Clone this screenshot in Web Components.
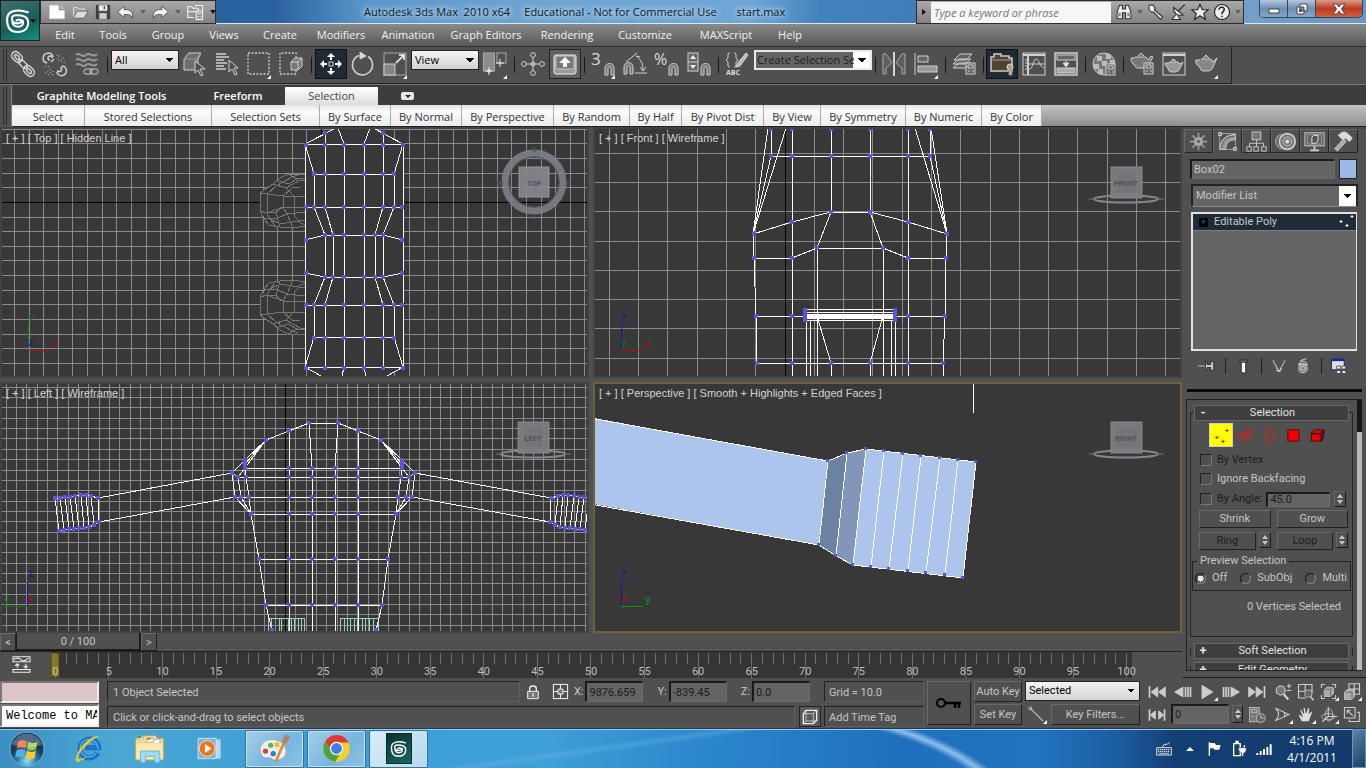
<!DOCTYPE html>
<html lang="en">
<head>
<meta charset="utf-8">
<title>Autodesk 3ds Max</title>
<style>
  html, body {
    height: 100%;
  }

  body {
    margin: 0;
    overflow: hidden;
    background: #505050;
    color: #c6c6c6;
    font: 11px/14px Roboto, "Liberation Sans", sans-serif;
    --ui: "Open Sans", "Noto Sans", sans-serif;
  }
</style>
</head>
<body>
<max-app></max-app>

<script>
// 24x24 icons, stroked in the current colour
const icons = {
  link: '<g fill="none" stroke-width="1.500"><rect x="0" y="1" width="12" height="8" rx="4" transform="rotate(45 6 5)"/><rect x="3" y="3.500" width="6" height="3" rx="1.500" transform="rotate(45 6 5)"/><rect x="12" y="15" width="12" height="8" rx="4" transform="rotate(45 18 19)"/><rect x="15" y="17.500" width="6" height="3" rx="1.500" transform="rotate(45 18 19)"/><rect x="7" y="9.500" width="10" height="5" rx="2.500" transform="rotate(45 12 12)"/></g>',
  unlink: '<g fill="none"><path d="M8 10l3-3M10 5a5 5 0 1 0-6 6M7 8a2 2 0 1 1 2-2M14 21a5 5 0 1 0 6-7l-2 2a2 2 0 1 1-3 3z" stroke-width="1.5"/><path stroke-dasharray="1 2" d="M14 7l4-5M15 9l7-4M14 4l1-3M18 9l5 2M2 14l5 1M2 21l6-4M5 23l4-4M9 23l1-4"/></g>',
  bind: '<g fill="none"><path d="M1 3c4-4 6 4 10 0s6 4 11-1M1 8c4-4 6 4 10 0s6 4 11-1M1 13c4-4 6 4 10 0s6 4 11-1" stroke="#999" stroke-width="2"/><rect x="9" y="17" width="8" height="5" rx="2"/><rect x="15" y="17" width="8" height="5" rx="2"/></g>',
  pick: '<path d="M1 7l5-6h12l-3 6v11H1z" fill="#6e6e6e"/><path d="M1 7h12l5-6M13 7v10" fill="none" stroke="#999"/><path d="M12 9v12l3-3 3 6 2-1-3-6h5z" fill="#505050"/>',
  byname: '<path d="M1 2h10M1 5h13M1 8h8M1 11h11M1 14h8M1 17h10" stroke-width="1.5"/><path d="M14 8v12l3-3 3 6 2-1-3-6h4z" fill="#505050"/>',
  region: '<rect x="1" y="1" width="21" height="21" fill="none" stroke-dasharray="2 1.5" stroke-width="1.3"/>',
  crossing: '<path d="M17 6V1H1v21h16v-4" fill="none" stroke-dasharray="2 1.5" stroke-width="1.3"/><path d="M12 10l4-4h7v8l-4 4h-7z" fill="#777"/><path d="M12 10h7v8M19 10l4-4" fill="none"/>',
  move: '<path stroke="none" fill="#fff" d="M12 1l4 4h-3v3h-2V5H8zM12 23l4-4h-3v-3h-2v3H8zM1 12l4-4v3h3v2H5v3zM23 12l-4-4v3h-3v2h3v3z"/><rect x="10" y="10" width="4" height="4" fill="none"/>',
  rotate: '<path d="M8 3.5a10 10 0 1 0 9 1" fill="none" stroke-width="1.6"/><path d="M9 0v7l6-3z" fill="#ddd"/>',
  scale: '<rect x="1" y="1" width="22" height="22" fill="none" stroke="#aaa"/><rect x="1" y="12" width="11" height="11" fill="#858585"/><path d="M13 11l7-7M16 3h5v5" fill="none" stroke="#fff" stroke-width="1.5"/>',
  pivot: '<rect x="0.500" y="1" width="11" height="18" fill="#8c8c8c" stroke="#aaa"/><rect x="14" y="1" width="9" height="10" fill="none" stroke="#aaa"/><path d="M6 15v8M2 19h8M17 7v8M13 11h8M6 17v4M4 19h4" stroke="#eee"/>',
  manipulate: '<path d="M12 5v14M5 12h14"/><g fill="#505050"><circle cx="12" cy="3" r="2.400"/><circle cx="12" cy="21" r="2.400"/><circle cx="3" cy="12" r="2.400"/><circle cx="21" cy="12" r="2.400"/></g><circle cx="12" cy="12" r="2"/>',
  keyboard: '<rect x="1" y="3" width="22" height="19" rx="2" fill="#999" stroke="#eee"/><rect x="3" y="4" width="18" height="13" rx="1" fill="#777" stroke="#ccc"/><path d="M12 5l6 6h-4v4h-4v-4H6z" fill="#fff" stroke="none"/>',
  snap: '<text x="0" y="13" font-size="17" font-family="Open Sans" fill="#ddd" stroke="none">3</text><path d="M14 23v-7a4 4 0 0 1 9 0v7h-3v-7a1.500 1.500 0 0 0-3 0v7z" fill="#777"/>',
  anglesnap: '<path d="M1 22v-7a4 4 0 0 1 9 0v7H7v-7a1.500 1.500 0 0 0-3 0v7z" fill="#777"/><path d="M3 10L14 1M12 21h12M13 4c5 3 7 8 7 15M13 4l4 1M20 19l-3-4M20 19l3-4" fill="none"/>',
  percent: '<text x="-1" y="13" font-size="16" font-family="Open Sans" fill="#ddd" stroke="none">%</text><path d="M14 23v-7a4 4 0 0 1 9 0v7h-3v-7a1.500 1.500 0 0 0-3 0v7z" fill="#777"/>',
  spinsnap: '<rect x="1" y="1" width="10" height="18" fill="#666"/><path d="M1 10h10"/><path d="M3 7h6L6 3zM3 13h6l-3 4z" fill="#eee" stroke="none"/><path d="M14 23v-7a4 4 0 0 1 9 0v7h-3v-7a1.500 1.500 0 0 0-3 0v7z" fill="#777"/>',
  named: '<path d="M5 1H4Q3 1 3 3v3L1 8l2 2v3q0 2 1 2h1M9 1h1q1 0 1 2v3l2 2-2 2v3q0 2-1 2H9" fill="none"/><path d="M12 12l9-11 2 2-8 11-4 1z" fill="#bbb"/><text x="1" y="23" font-size="7" font-weight="bold" font-family="Open Sans" fill="#ddd" stroke="none">ABC</text>',
  mirror: '<path d="M1 2v20h3v-6l5-4V9L4 2zM23 2v20h-3v-6l-5-4V9l5-7z" fill="#5e5e5e" stroke="#aaa"/><path d="M12 0v24" stroke="#fff" stroke-width="1.500"/>',
  align: '<path d="M1 1v22"/><rect x="4" y="4" width="10" height="6" fill="#666"/><rect x="4" y="14" width="19" height="6" fill="#999"/>',
  layers: '<g fill="#606060"><path d="M1 16l6-5h12l-6 5zM1 12l6-5h12l-6 5zM2 8l6-6h12l-6 6z"/></g><rect x="14" y="11" width="9" height="11" fill="#666"/><path d="M16 13h5v3h-5zM16 19h2M20 19h2"/>',
  ribbon: '<path d="M1 5h3V2h7v2h8v2h3v13H1z" fill="#4d4336" stroke="#d3cbb8" stroke-width="1.500"/><path d="M2 8h19" stroke="#b2a58a"/><circle cx="20" cy="15" r="3" fill="#b49d7a" stroke="#ddc"/><path d="M19 18h3v5h-3z" fill="#cba" stroke="#888"/>',
  curve: '<rect x="1" y="1" width="22" height="22" fill="none"/><path d="M1 3h22M6 4v19" stroke-width="2"/><path d="M7 17c4 1 4-10 7-10s4 8 8 9M3 8h2M3 11h2M3 14h2M3 17h2M7 12h15" fill="none"/>',
  schematic: '<rect x="1" y="1" width="22" height="22" fill="none" stroke-width="1.500"/><rect x="3" y="3" width="18" height="5" fill="#666"/><rect x="3" y="16" width="18" height="5" fill="#aaa"/><path d="M12 8v5M9 11h6l-3 4z" fill="#fff"/>',
  material: '<circle cx="12" cy="12" r="11" fill="#777"/><path d="M5 4h5v5H5zM14 2h5v5h-5zM2 12h5v5H2zM10 9h5v5h-5zM18 8h4v5h-4zM6 17h5v5H6z" fill="#bbb" stroke="none"/><rect x="14" y="12" width="9" height="11" fill="#666"/><path d="M16 14h5v3h-5zM16 20h2M20 20h2"/>',
  rendersetup: '<path d="M5 5h11l2 3 3-4 2 1-4 7c-1 3-3 4-6 4H8c-2 0-3-1-3-3C2 12 1 9 1 6h4M8 4l3-3 3 3" fill="#777"/><rect x="14" y="11" width="9" height="11" fill="#666"/><path d="M16 13h5v3h-5zM16 19h2M20 19h2"/>',
  renderframe: '<rect x="1" y="1" width="22" height="22" fill="none"/><path d="M1 3h22" stroke-width="2"/><path d="M7 10h9l2 2 3-2-3 6c-1 3-3 4-5 4h-3c-3 0-4-2-4-4-2-1-3-3-3-5h4M9 9l2-2 3 2" fill="#999"/>',
  teapot: '<path d="M7 7h10l2 3 4-4-4 9c-1 3-3 4-6 4h-3c-3 0-4-2-4-4C3 14 1 11 2 8h4M9 6l3-3 3 3" fill="#888"/>',

  newfile: '<path d="M2 3h13l7 6v12H2z" fill="#fff"/><path d="M15 3v6h7" fill="#bbb" stroke="#666"/>',
  open: '<path d="M2 20V5h6l2 2h8v3" fill="#aaa" stroke="#eee"/><path d="M2 20L7 10h16l-6 10z" fill="#ddd" stroke="#444"/>',
  save: '<path d="M2 2h20v20H2z" fill="#444" stroke="#222"/><path d="M6 2h12v8H6z" fill="#eee"/><path d="M7 14h10v8H7z" fill="#ccc"/><path d="M14 3v5" stroke="#444" stroke-width="2"/>',
  undo: '<path d="M1 11l9-8v5c8-1 13 3 12 12-2-5-6-6-12-5v4z" fill="#f4f4f4" stroke="#333"/>',
  redo: '<path d="M23 11l-9-8v5C6 7 1 11 2 20c2-5 6-6 12-5v4z" fill="#f4f4f4" stroke="#333"/>',
  project: '<g fill="#999" stroke="#f4f4f4" stroke-width="1.500"><path d="M1 4h6l1 2h8v5H1zM1 11v8h9M12 4V2h10v8"/><rect x="13" y="10" width="9" height="12"/><path d="M15 13h5M15 18h2M19 18h1"/></g>',
  binoculars: '<path d="M3 21V11l3-8h4v5h4V3h4l3 8v10h-7v-8h-4v8z" fill="#eee" stroke="#333" stroke-width="1.500"/><path d="M4 13h4v5H4zM16 13h4v5h-4z" fill="#888"/>',
  wrench: '<path d="M3 3c5-2 9 2 7 6l11 10-3 3L9 12C4 13 1 8 3 3z" fill="#eee" stroke="#333" stroke-width="1.500"/>',
  dish: '<path d="M6 6c0 8 5 12 13 10zM12 11l9-9M9 16l-5 6h11l-3-5" fill="#eee" stroke="#333" stroke-width="1.500"/>',
  star: '<path d="M12 2l3 7h8l-6 5 2 8-7-5-7 5 2-8-6-5h8z" fill="#eee" stroke="#222" stroke-width="1.500"/>',
  help: '<circle cx="12" cy="12" r="10" fill="#eee" stroke="#222" stroke-width="1.500"/><path d="M8 9c0-5 8-4 7 0 0 2-3 2-3 6M12 17v2" fill="none" stroke="#222" stroke-width="2"/>',

  create: '<g stroke="#999" stroke-width="2"><path d="M12 2v20M2 12h20M5 5l14 14M19 5L5 19"/></g><circle cx="12" cy="12" r="5" fill="#aaa" stroke="#999"/><circle cx="12" cy="12" r="2" fill="#666" stroke="none"/>',
  modify: '<path d="M3 3h18v18H3z" fill="none" stroke="#aaa"/><path d="M3 20C4 10 10 4 21 4v6c-7 0-11 4-11 11H3z" fill="#999"/><path d="M5 20C6 11 11 6 20 6" fill="none" stroke="#555"/><path d="M2 2h3v3H2zM19 19h3v3h-3z" fill="#505050" stroke="#fff"/>',
  hierarchy: '<rect x="7" y="1" width="10" height="9" fill="#777"/><path d="M12 10v8M4 18v-4h16v4" fill="none"/><g fill="#505050"><rect x="1" y="18" width="5" height="5"/><rect x="9" y="18" width="5" height="5"/><rect x="18" y="18" width="5" height="5"/></g>',
  motion: '<g fill="none"><path d="M8 3c-8 4-8 14 0 18M5 4c-7 5-5 12 0 16" stroke="#aaa"/><circle cx="14" cy="12" r="9" fill="#777" stroke-width="2"/><circle cx="14" cy="12" r="5"/><circle cx="14" cy="12" r="2" fill="#ddd"/></g>',
  display: '<rect x="1" y="2" width="22" height="15" fill="#666"/><path d="M7 22h10M12 17v5" stroke-width="2"/><path d="M4 4h16v11H4z" fill="none" stroke="#999"/><path d="M9 7l2-2h5v6l-2 3H9z" fill="#555" stroke="#eee"/>',
  hammer: '<path d="M2 20L12 9l3 3L5 23z" fill="#aaa"/><path d="M6 5c4-5 9-5 12-1l4 4-3 4-5-4-3 2z" fill="#ddd"/>',
  pin: '<path d="M0 12h10" stroke="#ddd"/><path d="M10 6v12h2v-4h5v4h4V6h-4v4h-5V6z" fill="#ccc" stroke="#111"/>',
  tube: '<path d="M7 3h10v3H7z" fill="#888" stroke="#111"/><path d="M9 6h6v15H9z" fill="#fff" stroke="#111"/>',
  unique: '<path d="M3 4l4 7 4 7 1 3 1-3 4-7 4-7M9 14v5h6v-5" fill="none" stroke-width="1.800" stroke-dasharray="3 1"/>',
  trash: '<path d="M6 10h12v9c-2 4-10 4-12 0z" fill="#777" stroke-width="1.500"/><path d="M6 10c0-7 12-7 12 0H6c2-3 9-3 11 0M8 4l9-3M9 13h6v5H9z" fill="none" stroke-width="1.500"/>',
  configure: '<path d="M2 3h17v14H2z" fill="#ddd" stroke="#115"/><path d="M2 4h17" stroke="#1520c0" stroke-width="3"/><path d="M9 12h5v4H9zM16 12h5v4h-5zM9 18h5v4H9zM16 18h5v4h-5z" fill="#eee" stroke="#334"/>',
  edge: '<path d="M1 13L22 3l-6 17z" fill="none" stroke="#d02520" stroke-width="2"/><path d="M8 12l9-4-2 7z" fill="none" stroke="#d02520" stroke-width="1.500"/>',
  border: '<path d="M7 4c5-5 14-1 13 7 0 12-8 14-11 10-2-4 3-6 1-9-3-1-6-4-3-8z" fill="none" stroke="#d02520" stroke-width="2"/>',
  polygon: '<rect x="3" y="3" width="18" height="18" fill="#f00000" stroke="#200"/>',
  element: '<path d="M2 9l5-6h15l-4 6v12H2z" fill="#f00000" stroke="#100"/><path d="M18 9l4-6v12l-4 6z" fill="#60106a" stroke="#100"/><path d="M2 9h16" stroke="#100" fill="none" stroke-width="2"/>',

  minicurve: '<path d="M0 1h24v7H0zM0 19h24v4H0z" fill="none" stroke="#eee" stroke-width="1.500"/><path d="M1 5q6-4 10 0t11-2M6 17v-6M3 14l3-3 3 3M18 11v6M15 14l3 3 3-3" fill="none" stroke="#eee" stroke-width="1.500"/>',
  lock: '<path d="M7 11V7q0-4 5-4t5 4v4" fill="none" stroke="#eee" stroke-width="2"/><path d="M4 11h16v11H4z" fill="#777" stroke="#eee" stroke-width="1.500"/><path d="M12 14v5" stroke="#eee" stroke-width="2"/>',
  absolute: '<rect x="2" y="2" width="20" height="20" fill="none" stroke="#eee" stroke-width="1.500"/><circle cx="12" cy="12" r="4" fill="#777" stroke="#eee" stroke-width="1.500"/><path d="M12 2v6M12 16v6M2 12h6M16 12h6" stroke="#eee" stroke-width="1.500"/>',
  isolate: '<path d="M2 7l4-5h16v15l-5 5H2z" fill="none" stroke="#eee" stroke-width="2"/><path d="M2 7h15v15M17 7l5-5M6 3v15h15M2 22l4-4" fill="none" stroke="#eee"/>',
  key: '<circle cx="4" cy="12" r="4" fill="none" stroke="#000" stroke-width="2"/><path d="M8 12h16M18 13v4M22 13v4" stroke="#000" stroke-width="2.500"/>',
  tangent: '<path d="M3 3l17 17" stroke="#bbb" stroke-width="1.500"/><circle cx="3" cy="3" r="2"/>',
  first: '<path d="M3 5v14" stroke-width="2"/><path d="M13 6L5 12l8 6zM22 6l-8 6 8 6z" fill="#ccc"/>',
  prev: '<path d="M12 6L2 12l10 6z" fill="#ccc"/><path d="M15 6v12M18 6v12M21 6v12" stroke-width="2"/>',
  play: '<path d="M6 4l13 8-13 8z" fill="#ccc"/>',
  next: '<path d="M12 6l10 6-10 6z" fill="#ccc"/><path d="M3 6v12M6 6v12M9 6v12" stroke-width="2"/>',
  last: '<path d="M21 5v14" stroke-width="2"/><path d="M11 6l8 6-8 6zM2 6l8 6-8 6z" fill="#ccc"/>',
  keymode: '<path d="M3 5v14M21 5v14" stroke-width="2"/><path d="M10 7l-6 5 6 5zM14 7l6 5-6 5z" fill="#ccc"/>',
  timeconfig: '<rect x="2" y="2" width="13" height="19" fill="#777"/><path d="M5 5h7v4H5zM5 14h3"/><circle cx="17" cy="16" r="6" fill="#666"/><path d="M17 12v4h4" fill="none"/>',
  zoom: '<circle cx="9" cy="10" r="6" fill="#777" stroke-width="1.500"/><path d="M13 15l6 7" stroke-width="3"/><path d="M17 4h6M20 1v6M17 10h6" stroke-width="1.500"/>',
  zoomall: '<path d="M2 2h18v12M2 2v18h10M11 2v10M2 11h9" fill="none" stroke-width="1.500"/><circle cx="15" cy="14" r="5" fill="#666"/><path d="M18 18l4 5" stroke-width="2"/>',
  extents: '<path d="M2 7V2h5M17 2h5v5M22 17v5h-5M7 22H2v-5" fill="none" stroke-width="1.500"/><path d="M6 9l4-3h9v9l-4 4H6z" fill="#aaa"/><path d="M6 9h9v10M15 9l4-3" fill="none" stroke="#555"/>',
  extentsall: '<path d="M8 1h14v14H8zM15 1v14M8 8h14" fill="none" stroke-width="1.500"/><path d="M2 12l3-3h10v9l-3 4H2z" fill="#aaa"/><path d="M2 12h10v10" fill="none" stroke="#555"/>',
  fov: '<path d="M2 3l19 9L2 21M15 9v6M2 3c6 5 6 12 0 18" fill="none" stroke-width="1.500"/>',
  pan: '<path d="M6 21l-4-8q0-3 3-1l2 2L4 6q1-3 3 0l2 4-1-7q2-2 3 0l1 6 2-6q2-2 3 1l-1 6 3-3q3 0 1 3l-4 11z" fill="#ddd" stroke="#444"/>',
  orbit: '<path d="M11 1v13L3 21M11 14h12" fill="none" stroke-width="1.500"/><ellipse cx="11" cy="14" rx="9" ry="4" fill="none"/><ellipse cx="12" cy="12" rx="5" ry="8" fill="none"/>',
  maximize: '<path d="M2 2h15v15H2zM20 9h3v13H9v-3" fill="none" stroke-width="1.500"/><path d="M6 6l8 8M6 11V6h5" fill="none" stroke-width="1.500"/>',

  trayflag: '<path d="M5 2v20" stroke="#fff" stroke-width="2"/><path d="M6 3h7l2 3h7l-2 7h-7l-2-2H6z" fill="#fff" stroke="none"/>',
  trayplug: '<path d="M4 4h10v18H4z" fill="none" stroke="#fff" stroke-width="2"/><path d="M7 0h4v3H7z" fill="#fff" stroke="#fff"/><path d="M14 6v4M20 6v4" stroke="#fff" stroke-width="2"/><path d="M11 10h12q0 8-4 8v5h-3v-5q-5-1-5-8z" fill="#fff" stroke="#23446b"/>',
  traysignal: '<path d="M2 18v3M7 15v6M12 12v9M17 9v12M22 5v16" stroke="#fff" stroke-width="3"/>',
  traykeys: '<path d="M1 10h22v11H1zM10 9q0-4 5-4t5-3" fill="none" stroke="#ddd" stroke-width="1.500"/><path d="M3 13h18M3 16h18M5 19h14" stroke="#ddd" stroke-width="2" stroke-dasharray="2 1"/>',

  start: '<defs><radialGradient id="g" cx=".5" cy=".85"><stop offset="0" stop-color="#8fe0f5"/><stop offset=".6" stop-color="#2877a8"/><stop offset="1" stop-color="#173a5c"/></radialGradient></defs><circle cx="12" cy="12" r="11.300" fill="url(#g)" stroke="#7fb6d3" stroke-width=".6"/><g stroke="none"><path d="M6 7q3-2 6 0l-1 5q-3-2-6 0z" fill="#e8602c"/><path d="M13 7q3 2 6 0l-1 5q-3 2-6 0z" fill="#9bcc3c"/><path d="M5 13q3-2 6 0l-1 5q-3-2-6 0z" fill="#4fb0ea"/><path d="M12 13q3 2 6 0l-1 5q-3 2-6 0z" fill="#fbc934"/></g><path d="M2 9a10.500 10.500 0 0 1 20 0q-10 4-20 0z" fill="#fff" opacity=".25" stroke="none"/>',
  ie: '<path d="M19 15a7.500 7.500 0 1 1 .8-4H9" fill="none" stroke="#1a72c4" stroke-width="4"/><path d="M18 15a7 7 0 1 1 1-3" fill="none" stroke="#58b9f0" stroke-width="1"/><path d="M22 5c1-7-10-2-15 4S-1 24 4 22c3-1 5-3 6-4-9 5-9 0-1-8S23-1 22 5z" fill="#f6c928" stroke="none"/>',
  explorer: '<path d="M1 4h6l1-2h9l1 2h5v17H1z" fill="#efd98b" stroke="#b8964c" stroke-width=".6"/><path d="M3 2h4v3H3zM10 4h5v3h-5zM15 5h5v3h-5z" fill="#fff" stroke="#999" stroke-width=".4"/><path d="M3 2h3v2H3z" fill="#3aa343" stroke="none"/><path d="M10 4h3v1h-3z" fill="#d04020" stroke="none"/><path d="M2 8h20v12H2z" fill="#f8eab0" stroke="none"/><path d="M5 23v-9h15v9h-4v-5H9v5z" fill="#9fdcf2" stroke="#60a9cc" stroke-width=".6"/>',
  wmp: '<path d="M13 4h8v17h-8z" fill="#b9d8ea" stroke="#8fbad6" stroke-width=".6"/><path d="M1 3h16v18H1z" fill="#7fb2d8" stroke="#d6ecf8" stroke-width=".8"/><circle cx="9" cy="12" r="7" fill="#ee7418" stroke="#fff" stroke-width=".6"/><path d="M7 8l6 4-6 4z" fill="#fff" stroke="none"/>',
  paint: '<path d="M10 5C2 5-1 12 2 17c2 4 6 1 8 3 3 3 12 0 11-7-1-5-6-8-11-8z" fill="#e9eef2" stroke="#97a5b0" stroke-width=".6"/><g stroke="none"><circle cx="5" cy="14" r="2" fill="#e04030"/><circle cx="9" cy="9.500" r="2" fill="#5bb548"/><circle cx="14" cy="9" r="2" fill="#f0c030"/><circle cx="11" cy="16" r="2" fill="#2a7fd0"/></g><path d="M13 22l7-16" stroke="#d98a2c" stroke-width="2"/><path d="M18 7l2-6 4 2-3 5z" fill="#b88058" stroke="none"/>',
  chrome: '<circle cx="12" cy="12" r="11" fill="#f5cd2c" stroke="none"/><path d="M2.500 6.500A11 11 0 0 1 22 7H12a5 5 0 0 0-4 7z" fill="#d93b30" stroke="none"/><path d="M2.500 6.500A11 11 0 0 0 11 23l5-8.500a5 5 0 0 1-8 0z" fill="#48a546" stroke="none"/><circle cx="12" cy="12" r="5" fill="#3d7fe0" stroke="#fff" stroke-width="1"/>',
  maxlogo: '<path d="M22 4C12 1 2 2 2 11c0 9 4 12 10 12 8 0 11-5 10-11-1-4-5-5-11-5-4 0-5 2-4 5 1 4 8 3 9 1 0-2-4-2-5-1M7 12c0 5 2 6 6 6 4 0 5-3 4-6" fill="none" stroke="#fff" stroke-width="2" stroke-linecap="round"/>'
};

class MaxIcon extends HTMLElement {
  constructor() {
    super();
    const size = this.getAttribute('size') || 24;
    const shadow = this.attachShadow({ mode: 'open' });
    shadow.innerHTML = `<style>
      :host {
        display: inline-flex;
        flex: none;
      }
      svg {
        display: block;
        overflow: visible;
        stroke: #d0d0d0;
        fill: none;
      }
    </style>
    <svg width="${size}" height="${size}" viewBox="0 0 24 24" aria-hidden="true">${icons[this.getAttribute('name')] || ''}</svg>`;
  }
}

// shared pieces for buttons, fields and drop-downs
const controls = `
  * { box-sizing: border-box; }
  button, input, select {
    font: inherit;
    color: inherit;
    margin: 0;
    padding: 0;
    border: 0;
    border-radius: 0;
    background: none;
    min-width: 0;
  }
  button {
    display: flex;
    align-items: center;
    justify-content: center;
    white-space: nowrap;
  }
  select {
    appearance: none;
    color: #000;
    padding: 0 16px 0 3px;
    border: 1px solid #222;
    background:
      linear-gradient(45deg, transparent 50%, #000 50%) right 8px center / 4px 4px no-repeat,
      linear-gradient(-45deg, transparent 50%, #000 50%) right 4px center / 4px 4px no-repeat,
      linear-gradient(#f4f4f4, #d4d4d4);
  }
  select.dark {
    background:
      linear-gradient(45deg, transparent 50%, #000 50%) right 8px center / 4px 4px no-repeat,
      linear-gradient(-45deg, transparent 50%, #000 50%) right 4px center / 4px 4px no-repeat,
      linear-gradient(#fff, #fff) right center / 17px 100% no-repeat,
      #646464;
  }
  .field {
    background: #646464;
    border: 2px solid #1a1a1a;
    border-right: 1px solid #6c6c6c;
    border-bottom: 1px solid #6c6c6c;
    padding: 0 2px;
    color: #1c1c1c;
  }
  .flat {
    border: 1px solid #6a6a6a;
    border-right-color: #222;
    border-bottom-color: #222;
  }
  .spin {
    display: flex;
    flex: none;
    flex-direction: column;
    justify-content: space-evenly;
    align-items: center;
    width: 12px;
    border: 1px solid #666;
    border-right-color: #1a1a1a;
    border-bottom-color: #1a1a1a;
  }
  .spin::before, .spin::after {
    content: "";
    border: 3px solid transparent;
    border-top: 0;
    border-bottom: 4px solid #c4c4c4;
  }
  .spin::after { transform: rotate(180deg); }
`;

class TitleBar extends HTMLElement {
  constructor() {
    super();
    const shadow = this.attachShadow({ mode: 'open' });
    shadow.innerHTML = `<style>${controls}
      :host {
        display: flex;
        position: relative;
        height: 24px;
        padding-left: 40px;
        background: linear-gradient(90deg, #2b62a0 0, #2a619f 20%, #5c97c9 27%, #6fa5d2 40%, #6ea6d6 55%, #4283bd 60%, #3f7db9 68%, #76a0c8 90%, #6a97c0 100%);
        border-bottom: 1px solid #dbe7f2;
        color: #101820;
        font: 11px/24px var(--ui);
      }
      .logo {
        position: absolute;
        left: 0;
        top: 0;
        width: 40px;
        height: 41px;
        z-index: 2;
        border: 1px solid #222;
        background: linear-gradient(160deg, #3d706f, #146059 60%, #189082);
      }
      .logo::after, .more {
        content: "";
        border: 3px solid transparent;
        border-top: 4px solid #111;
        border-bottom: 0;
      }
      .quick, .info {
        display: flex;
        align-items: center;
        height: 24px;
        background: linear-gradient(#a9a9a9, #828282);
        border: 1px solid #2c2c2c;
        flex: none;
      }
      .quick { width: 176px; gap: 6px; padding-left: 7px; }
      .info { width: 328px; gap: 4px; }
      .info > .more:first-child {
        transform: rotate(-90deg);
        margin: 0 0 0 4px;
      }
      .more { flex: none; width: 0; }
      .grey { border-top-color: #555; opacity: .8; }
      h1 {
        flex: 1;
        min-width: 0;
        overflow: hidden;
        margin: 0;
        font: inherit;
        white-space: pre;
        padding-left: 148px;
        text-shadow: 0 0 6px #cfe4f6, 0 0 6px #cfe4f6;
      }
      input {
        width: 180px;
        height: 21px;
        background: #f6f6f6;
        padding: 2px 3px 0;
        font-style: italic;
        outline: 0;
      }
      input::placeholder { color: #777; opacity: 1; }
      .window {
        display: flex;
        width: 104px;
        height: 18px;
        margin: 0 3px 0 15px;
        border: 1px solid #294766;
        border-top: 0;
        border-radius: 0 0 5px 5px;
        overflow: hidden;
        flex: none;
      }
      .window button {
        width: 28px;
        background: linear-gradient(#b4c7da, #6e90b2 50%, #86a7c4);
        border-right: 1px solid #294766;
      }
      .window .close {
        flex: 1;
        border: 0;
        background: linear-gradient(#dd9a8a, #bd3a22 50%, #d3603c);
      }
      .window svg { fill: #fff; stroke: #445; stroke-width: 1; }
    </style>
    <button class="logo" aria-label="Application menu"><max-icon name="maxlogo" size="25"></max-icon></button>
    <div class="quick">
      <max-icon name="newfile" size="18"></max-icon>
      <max-icon name="open" size="17"></max-icon>
      <max-icon name="save" size="16"></max-icon>
      <max-icon name="undo" size="17"></max-icon><i class="more grey"></i>
      <max-icon name="redo" size="17"></max-icon><i class="more grey"></i>
      <max-icon name="project" size="17"></max-icon><i class="more"></i>
    </div>
    <h1>Autodesk 3ds Max  2010 x64     Educational - Not for Commercial Use       start.max</h1>
    <div class="info">
      <i class="more"></i>
      <input type="text" aria-label="Search" placeholder="Type a keyword or phrase">
      <max-icon name="binoculars" size="18"></max-icon><i class="more grey"></i>
      <max-icon name="wrench" size="18"></max-icon>
      <max-icon name="dish" size="18"></max-icon>
      <max-icon name="star" size="18"></max-icon>
      <max-icon name="help" size="18"></max-icon><i class="more grey"></i>
    </div>
    <div class="window">
      <button aria-label="Minimize"><svg width="12" height="12"><rect x="1" y="6" width="10" height="4"/></svg></button>
      <button aria-label="Restore"><svg width="12" height="12"><path fill-rule="evenodd" d="M4 1h7v7H4zM1 4h7v7H1zM3.500 6.500h2v2h-2z"/></svg></button>
      <button class="close" aria-label="Close"><svg width="14" height="12"><path d="M1 1h4l2 3 2-3h4L9.500 6l3.500 5H9L7 8l-2 3H1l3.500-5z"/></svg></button>
    </div>`;
  }
}

class MenuBar extends HTMLElement {
  constructor() {
    super();
    const menus = [['Edit', 42], ['Tools', 54], ['Group', 56], ['Views', 56], ['Create', 56], ['Modifiers', 66],
      ['Animation', 68], ['Graph Editors', 88], ['Rendering', 74], ['Customize', 82], ['MAXScript', 80], ['Help', 48]];
    const shadow = this.attachShadow({ mode: 'open' });
    shadow.innerHTML = `<style>${controls}
      :host {
        display: flex;
        height: 22px;
        padding-left: 44px;
        background: linear-gradient(#8a8a8a, #585858);
        color: #f2f2f2;
        font: 11px/20px var(--ui);
      }
      nav { display: flex; padding-bottom: 1px; }
    </style>
    <nav>${menus.map(([name, width]) => `<button style="width: ${width}px">${name}</button>`).join('')}</nav>`;
  }
}

class ToolBar extends HTMLElement {
  constructor() {
    super();
    const tool = (name, extra = '') => `<button class="tool ${extra}" aria-label="${name}"><max-icon name="${name}"></max-icon></button>`;
    const sep = '<i class="sep"></i>';
    const wide = '<i class="sep wide"></i>';
    const shadow = this.attachShadow({ mode: 'open' });
    shadow.innerHTML = `<style>${controls}
      :host {
        display: flex;
        height: 38px;
        border-top: 1px solid #333;
        font: 11px/14px var(--ui);
      }
      .bar {
        display: flex;
        align-items: flex-start;
        padding: 2px 9px 0 0;
        border-right: 1px solid #222;
        border-bottom: 1px solid #222;
      }
      .grip {
        flex: none;
        width: 4px;
        height: 32px;
        margin: 0 0 0 3px;
        border: solid #2c2c2c;
        border-width: 0 1px;
      }
      .tool {
        position: relative;
        flex: none;
        width: 32px;
        height: 30px;
      }
      .on {
        background: #1e2a35;
        border: 1px solid #111;
      }
      .set {
        background: #616161;
        border: 1px solid #222;
      }
      .fly::after {
        content: "";
        position: absolute;
        right: 4px;
        bottom: 0;
        border: 2px solid transparent;
        border-right-color: #fff;
        border-bottom-color: #fff;
      }
      .sep {
        flex: none;
        width: 6px;
        height: 16px;
        margin-top: 8px;
        background: linear-gradient(#161616, #161616) center / 1px 100% no-repeat;
      }
      .wide { width: 8px; }
      select {
        flex: none;
        width: 68px;
        height: 20px;
        margin-top: 1px;
      }
      .sets {
        width: 118px;
        margin: 1px 0 0 1px;
        color: #1c1c1c;
        border: 2px solid #e8e8e8;
        padding: 0 16px 0 1px;
      }
    </style>
    <div class="bar">
      <i class="grip"></i>
      ${tool('link')}${tool('unlink')}${tool('bind')}${wide}
      <select aria-label="Selection filter"><option>All</option></select>
      ${tool('pick')}${tool('byname')}${tool('region', 'fly')}${tool('crossing')}${wide}
      ${tool('move', 'on')}${tool('rotate')}${tool('scale', 'fly')}
      <select aria-label="Reference coordinate system"><option>View</option></select>
      ${tool('pivot', 'fly')}${sep}
      ${tool('manipulate')}${tool('keyboard', 'set')}${sep}
      ${tool('snap', 'fly')}${tool('anglesnap')}${tool('percent')}${tool('spinsnap')}${sep}
      ${tool('named')}
      <select class="dark sets" aria-label="Named selection sets"><option>Create Selection Se</option></select>
      ${sep}${tool('mirror')}${tool('align', 'fly')}${sep}
      ${tool('layers')}${sep}
      ${tool('ribbon', 'on')}${tool('curve')}${tool('schematic')}${sep}
      ${tool('material')}${sep}
      ${tool('rendersetup')}${tool('renderframe')}${tool('teapot', 'fly')}
    </div>`;
  }
}

class RibbonBar extends HTMLElement {
  constructor() {
    super();
    const panels = [['Select', 73], ['Stored Selections', 127], ['Selection Sets', 108], ['By Surface', 71], ['By Normal', 71],
      ['By Perspective', 92], ['By Random', 76], ['By Half', 52], ['By Pivot Dist', 82], ['By View', 57], ['By Symmetry', 85],
      ['By Numeric', 76], ['By Color', 60]];
    const shadow = this.attachShadow({ mode: 'open' });
    shadow.innerHTML = `<style>${controls}
      :host {
        display: flex;
        height: 43px;
        border-top: 1px solid #777;
        font: 11px/18px var(--ui);
      }
      .grip {
        flex: none;
        width: 4px;
        margin: 2px 4px 2px 3px;
        border: solid #2c2c2c;
        border-width: 0 1px;
      }
      .body {
        flex: 1;
        display: grid;
        grid-template-rows: 20px 22px;
        border-left: 1px solid #808080;
      }
      .tabs {
        display: flex;
        align-items: flex-end;
        background: #3d3d3d;
        color: #fff;
      }
      .tabs button { height: 18px; font-weight: 600; }
      .tabs .active {
        background: linear-gradient(#fff, #dcdcdc);
        color: #444;
        font-weight: 400;
      }
      .tabs .fold {
        width: 13px;
        height: 8px;
        margin: 0 0 5px 23px;
        background: #e4e8ee;
        border-radius: 2px;
      }
      .fold::after {
        content: "";
        border: 3px solid transparent;
        border-top-color: #222;
        border-bottom: 0;
      }
      .panels {
        display: flex;
        background: linear-gradient(#c4c4c4, #8e8e8e);
        border-bottom: 1px solid #222;
      }
      .panels button {
        background: linear-gradient(#e4e4e4, #fbfbfb 30%, #ececec);
        border-right: 1px solid #aaa;
        color: #333;
        padding-top: 2px;
      }
    </style>
    <i class="grip"></i>
    <div class="body">
      <div class="tabs">
        <button style="width: 179px">Graphite Modeling Tools</button>
        <button style="width: 94px">Freeform</button>
        <button class="active" style="width: 93px">Selection</button>
        <button class="fold" aria-label="Minimize ribbon"></button>
      </div>
      <div class="panels">${panels.map(([name, width]) => `<button style="width: ${width}px">${name}</button>`).join('')}</div>
    </div>`;
  }
}

// Scene geometry. Lines are "x y x y ..." strings, one polyline each.
const lines = (list, stroke = '#fff') =>
  list.map((p) => `<polyline points="${p}" fill="none" stroke="${stroke}"/>`).join('');
const dots = (list, size = 4) =>
  list.map(([x, y]) => `<rect x="${x - 2}" y="${y - 2}" width="${size}" height="${size}" fill="#5a55de"/>`).join('');
const row = (y, ...xs) => xs.map((x) => [x, y]);

function grid(x0, y0, step, w, h) {
  let d = '';
  for (let x = x0; x < w; x += step) d += `M${Math.floor(x) + 0.5} 0V1000`;
  for (let y = y0; y < h; y += step) d += `M0 ${Math.floor(y) + 0.5}H2000`;
  return `<path d="${d}" stroke="#8a8a8a" fill="none"/>`;
}

function gizmo(x, y, up, right, mid, colours) {
  return `<g class="axis"><path d="M${x} ${y}v-25" stroke="${colours[0]}"/><path d="M${x} ${y}h22" stroke="${colours[1]}"/>
    <text x="${x}" y="${y - 29}" fill="${colours[0]}">${up}</text><text x="${x + 24}" y="${y - 3}" fill="${colours[1]}">${right}</text>
    <text x="${x}" y="${y - 4}" fill="${colours[2]}">${mid}</text></g>`;
}

function cube(x, y, face) {
  return `<g class="cube"><ellipse cx="${x}" cy="${y + 17}" rx="32" ry="3.500" fill="none" stroke="#85878b" stroke-width="2"/>
    <path d="M${x - 37} ${y + 17}h6M${x + 32} ${y + 17}h6" stroke="#777"/>
    <rect x="${x - 15}" y="${y - 15}" width="31" height="31" fill="#7c7e82" stroke="#8c8e92" opacity=".94"/>
    <rect x="${x - 9}" y="${y - 9}" width="19" height="19" fill="#737579"/>
    <text x="${x}" y="${y + 4}" text-anchor="middle">${face}</text></g>`;
}

const hand = {
  top: [[55, 498], [60, 498], [65, 497], [70, 497], [75, 496], [81, 495], [86, 495], [91, 496], [98, 498]],
  bottom: [[59, 531], [64, 530], [69, 529], [74, 529], [79, 528], [84, 528], [89, 527], [94, 525], [99, 522]]
};
const flip = ([x, y]) => [649 - x, y];
const join = (pts) => pts.map((p) => p.join(' ')).join(' ');

function handMesh(top, bottom) {
  return lines([join(top), join(bottom), ...top.map((p, i) => join([p, bottom[i]]))]) + dots([...top, ...bottom]);
}

const sphere = lines([
  '305 174 288 174 280 178 273 184 267 188 260 193 260 211 264 219 269 225 280 227 293 228 305 226',
  '260 193 267 194 283 196 305 196', '260 211 267 213 283 207 305 207', '267 194 267 213 270 219 275 225',
  '283 196 283 207 287 214 305 212', '294 196 294 216 299 221 305 220', '267 194 276 186 292 177 298 175',
  '273 184 286 188 300 180 305 180', '276 180 288 184 299 178 305 179', '283 196 292 188 300 187',
  '267 213 276 212 283 207', '264 219 277 218 288 214', '270 219 281 224 297 221 305 225',
  '276 212 280 227', '288 216 293 228', '286 188 294 196', '288 174 300 181'
], '#777');

const legs = (from, list) => list.map((x) => `${x} ${from} ${x} 631`);

const scenes = {
  top: {
    origin: [2, 129],
    grid: [14.4, 129.3, 14.63],
    draw: () => `
      <path d="M0 202.500H600M321.500 120v18" stroke="#000"/>
      <path d="M305 174H288L260 193V211L269 225L290 228H305z" fill="#383838"/>
      <path d="M305 335H288L260 316V298L269 284L290 281H305z" fill="#383838"/>
      <path d="M305 144L336 128H373L403 144V367L387 376H321L305 367z" fill="#383838"/>
      ${sphere}<g transform="translate(0 508) scale(1 -1)">${sphere}</g>
      ${lines(['305 144 403 144 403 367 305 367 305 144', '314 174 394 174', '305 207 403 207', '305 240 325 235 383 235 403 240',
        '305 273 325 277 383 277 403 273', '305 305 403 305', '314 337 394 337', '344 144 344 367', '364 144 364 367',
        '325 133 325 207 333 235 333 277 325 305 325 367', '383 133 383 207 375 235 375 277 383 305 383 367',
        '305 144 314 174 314 207 325 235 325 277 314 305 314 337 305 367',
        '403 144 394 174 394 207 383 235 383 277 394 305 394 337 403 367',
        '305 144 336 128', '338 128 344 144', '370 128 364 144', '373 128 403 144',
        '305 367 321 376', '344 367 342 376', '364 367 366 376', '403 367 387 376'])}
      ${dots([...row(133, 325, 383), ...row(145, 306, 325, 344, 364, 383, 403), ...row(174, 314, 325, 344, 364, 383, 394),
        ...row(207, 306, 314, 325, 344, 364, 383, 394, 402), ...row(235, 325, 333, 344, 364, 375, 383), ...row(240, 306, 402),
        ...row(273, 306, 402), ...row(277, 325, 333, 344, 364, 375, 383), ...row(305, 306, 314, 325, 344, 364, 383, 394, 402),
        ...row(338, 314, 325, 344, 364, 383, 394), ...row(368, 306, 325, 344, 364, 383, 403)])}
      <g class="cube"><circle cx="534" cy="182" r="29" fill="none" stroke="#7d8087" stroke-width="7" opacity=".9"/>
      <circle cx="534" cy="182" r="25" fill="none" stroke="#55585d"/>
      <rect x="519" y="167" width="30" height="30" fill="#85878d" stroke="#999" opacity=".92"/>
      <text x="534" y="186" text-anchor="middle">TOP</text>
      <text x="534" y="152" text-anchor="middle">N</text><text x="534" y="219" text-anchor="middle">S</text>
      <text x="500" y="186" text-anchor="middle">W</text><text x="568" y="186" text-anchor="middle">E</text></g>
      ${gizmo(28, 350, 'y', 'x', 'z', ['#0b7a0b', '#b01010', '#1414b0'])}`
  },
  front: {
    origin: [595, 129],
    grid: [609.4, 153.3, 29.28],
    draw: () => `
      <path d="M785.500 120V400" stroke="#000"/>
      ${lines(['771 156 930 156', '792 128 792 376', '908 128 908 376', '831 128 831 212', '870 128 870 212',
        '771 128 771 156 753 234', '768 128 753 234', '786 128 753 234', '915 128 947 234', '930 128 930 156 947 234', '931 128 947 234',
        '753 234 792 222 831 212 870 212 908 222 947 234', '753 234 754 258 756 316 757 363 757 376', '947 234 946 258 945 316 943 363 943 376',
        '754 258 792 258 817 248 883 248 908 258 946 258', '831 212 817 248 817 376', '870 212 883 248 883 376',
        '756 316 945 316', '757 363 943 363', '817 316 831 363 831 376', '883 316 870 363 870 376',
        '806 309 895 309', '806 312 895 312', '806 320 895 320', '806 320 806 376', '810 320 810 376', '891 320 891 376', '895 320 895 376'])}
      <rect x="806" y="314" width="89" height="5" fill="#fff"/>
      <path d="M803 308h4v14h-4zM893 308h4v14h-4z" fill="#5a55de"/>
      ${dots([...row(129, 771, 792, 831, 870, 908, 930), ...row(156, 771, 792, 831, 870, 908, 930), ...row(212, 831, 870), ...row(222, 792, 908), ...row(234, 754, 947),
        ...row(248, 817, 883), ...row(258, 754, 792, 908, 946), ...row(316, 756, 792, 908, 945), ...row(363, 757, 792, 831, 870, 908, 943)])}
      ${cube(1126, 182, 'FRONT')}
      ${gizmo(621, 350, 'z', 'x', 'y', ['#1414b0', '#b01010', '#0b7a0b'])}`
  },
  left: {
    origin: [2, 384],
    grid: [6.2, 387.3, 10.34],
    draw: () => `
      <path d="M285.500 380V640" stroke="#000"/>
      ${lines(['268 631 268 618 304 618 304 631', '340 631 340 618 378 618 378 631',
        ...legs(618, [271, 279, 281, 288, 291, 294, 298, 301, 344, 347, 350, 354, 357, 362, 365, 369, 373])], '#9bd3b5')}
      ${lines(['232 473 245 460 266 440 289 431 309 423 338 423 358 431 381 440 402 460 415 473',
        '289 431 289 631', '358 431 358 631', '309 423 312 468 312 631', '338 423 335 468 335 631',
        '245 468 402 468', '238 477 409 477', '235 497 412 497', '251 514 396 514', '259 559 388 559', '266 605 382 605',
        '232 473 235 497 251 514 259 559 266 605 272 631', '415 473 412 497 396 514 388 559 382 605 376 631',
        '232 473 238 477 241 497 251 514', '415 473 409 477 406 497 396 514', '245 460 245 468 246 477 249 497 251 514',
        '402 460 402 468 401 477 398 497 396 514', '266 440 245 464', '266 440 245 468 238 477', '381 440 402 464', '381 440 402 468 409 477',
        '98 498 232 473', '99 522 235 497', '551 498 415 473', '550 522 412 497'])}
      ${handMesh(hand.top, hand.bottom)}${handMesh(hand.top.map(flip), hand.bottom.map(flip))}
      ${dots([...row(423, 309, 338), ...row(431, 289, 358), ...row(440, 266, 381), ...row(460, 245, 402), ...row(464, 245, 402), ...row(468, 245, 289, 312, 335, 358, 402),
        ...row(473, 232, 415), ...row(477, 238, 246, 289, 312, 335, 358, 401, 409), ...row(497, 235, 241, 249, 289, 312, 335, 358, 398, 406, 412),
        ...row(514, 251, 289, 312, 335, 358, 396), ...row(559, 259, 289, 312, 335, 358, 388), ...row(605, 266, 289, 312, 335, 358, 382), ...row(630, 272, 376)])}
      ${cube(533, 437, 'LEFT')}
      <g class="axis"><path d="M27.500 606v-24" stroke="#1414b0"/><path d="M27 606H4" stroke="#0b7a0b"/>
      <text x="28" y="577" fill="#1414b0">z</text><text x="4" y="603" fill="#0b7a0b">y</text><text x="27" y="602" fill="#b01010">x</text></g>`
  },
  perspective: {
    origin: [595, 384],
    draw: () => `
      <g fill="#adc5ec"><path d="M594 418L828 461L819 545L594 504z"/><path d="M866 449L976 462L963 578L853 565z"/></g>
      <path d="M828 461L847 453L836 556L819 545z" fill="#6c82a2"/><path d="M847 453L866 449L853 565L836 556z" fill="#8196b9"/>
      ${lines(['590 418 828 461 847 453 866 449 976 462 963 578 853 565 836 556 819 545 590 504', '828 461 819 545', '847 453 836 556', '866 449 853 565',
        '884 451 871 567', '903 454 889 569', '921 456 908 571', '940 458 926 573', '958 460 945 575', '973 384 973 413'])}
      ${dots([[828, 461], [847, 453], [866, 449], [884, 451], [903, 454], [921, 456], [940, 458], [958, 460], [976, 462],
        [819, 545], [836, 556], [853, 565], [871, 567], [889, 569], [908, 571], [926, 573], [945, 575], [963, 578]], 3)}
      ${cube(1126, 437, 'RIGHT')}
      ${gizmo(621, 606, 'z', 'y', 'x', ['#1414b0', '#0b9a0b', '#b01010'])}`
  }
};

class ViewPort extends HTMLElement {
  constructor() {
    super();
    const scene = scenes[this.getAttribute('scene')];
    const [x, y] = scene.origin;
    const shadow = this.attachShadow({ mode: 'open' });
    shadow.innerHTML = `<style>
      :host {
        display: block;
        position: relative;
        overflow: hidden;
        min-width: 0;
        min-height: 0;
        background: #383838;
        border: 2px solid #424242;
      }
      :host([active]) { border-color: #6f6238; }
      svg { display: block; width: 100%; height: 100%; }
      .label {
        position: absolute;
        left: 4px;
        top: 2px;
        color: #d4d4d4;
        font: 11px/14px "Liberation Sans", sans-serif;
        white-space: pre;
      }
      .cube { shape-rendering: auto; }
      .cube text {
        font: bold 7px "Liberation Sans", sans-serif;
        fill: #4e5157;
      }
      .axis text { font: 11px "Liberation Sans", sans-serif; }
    </style>
    <svg shape-rendering="crispEdges"><g transform="translate(${-x} ${-y})">
      ${scene.grid ? grid(...scene.grid, x + 1000, y + 600) : ''}${scene.draw()}
    </g></svg>
    <div class="label"><slot></slot></div>`;
  }
}

class TimeSlider extends HTMLElement {
  constructor() {
    super();
    const shadow = this.attachShadow({ mode: 'open' });
    shadow.innerHTML = `<style>${controls}
      :host { display: flex; height: 18px; background: #505050; }
      button { height: 18px; padding-top: 1px; }
      .step { width: 16px; }
      .thumb { width: 125px; border: 1px solid #1a1a1a; border-width: 0 2px 2px 1px; }
    </style>
    <button class="flat step" aria-label="Previous frame">&lt;</button>
    <button class="thumb">0 / 100</button>
    <button class="flat step" aria-label="Next frame">&gt;</button>`;
  }
}

class TrackBar extends HTMLElement {
  constructor() {
    super();
    let marks = '';
    for (let i = 0; i <= 100; i++) {
      const x = (0.4 + i * 0.991).toFixed(3) + '%';
      marks += `<line x1="${x}" x2="${x}" y1="1" y2="${i % 5 ? 12 : 26}"/>`;
      if (i % 5 === 0) marks += `<text x="${x}" y="23" ${i ? '' : 'class="now"'}>${i}</text>`;
    }
    const shadow = this.attachShadow({ mode: 'open' });
    shadow.innerHTML = `<style>
      :host {
        display: flex;
        height: 27px;
        border-top: 1px solid #1e1e1e;
        box-sizing: border-box;
      }
      max-icon { padding: 4px 21px 0 13px; }
      .track { flex: 1; background: #353535; }
      .end { width: 50px; }
      svg { display: block; width: 100%; height: 26px; overflow: visible; }
      line { stroke: #6f6f6f; shape-rendering: crispEdges; }
      text { text-anchor: middle; fill: #bebebe; }
      .now { fill: #d8d060; }
    </style>
    <max-icon name="minicurve" size="17"></max-icon>
    <div class="track"><svg><rect x="0" y="1" width="8" height="24" fill="#857a24" stroke="#4d4714"/>${marks}</svg></div>
    <div class="end"></div>`;
  }
}

class RollOut extends HTMLElement {
  constructor() {
    super();
    const open = this.hasAttribute('open');
    const shadow = this.attachShadow({ mode: 'open' });
    shadow.innerHTML = `<style>${controls}
      :host { display: block; }
      .frame {
        border: 1px solid #262626;
        padding: 0 3px;
        margin-top: 8px;
      }
      :host(:not([open])) .frame { height: 9px; border-width: 0 1px; }
      button {
        width: 100%;
        height: 16px;
        margin-top: -8px;
        background: #3e3e3e;
        border: 1px solid #666;
        color: #e2e2e2;
      }
      :host(:not([open])) button { margin-top: 0; transform: translateY(-4px); }
      .sign { width: 16px; font-weight: bold; font-size: 13px; }
      .name { flex: 1; padding-right: 14px; }
    </style>
    <div class="frame"><button aria-expanded="${open}"><span class="sign">${open ? '-' : '+'}</span><span class="name">${this.getAttribute('label')}</span></button><slot></slot></div>`;
  }
}

class CommandPanel extends HTMLElement {
  constructor() {
    super();
    const shadow = this.attachShadow({ mode: 'open' });
    shadow.innerHTML = `<style>${controls}
      :host {
        display: flex;
        flex-direction: column;
        width: 184px;
        flex: none;
        overflow: hidden;
        box-sizing: border-box;
        border-top: 2px solid #474747;
      }
      .tabs { display: flex; padding-left: 2px; }
      .tabs button {
        width: 29px;
        height: 24px;
        border: 1px solid #6a6a6a;
        border-width: 1px 0 0 1px;
        border-right: 1px solid #222;
        border-bottom: 1px solid #262626;
      }
      .tabs .active { border-bottom-color: transparent; }
      .name { display: flex; gap: 4px; margin: 6px 9px 5px 8px; }
      .name .field { flex: 1; height: 20px; color: #c6c6c6; }
      .swatch { width: 18px; height: 20px; background: #9cb9e6; border: 1px solid #222; }
      select {
        height: 23px;
        margin: 0 8px 5px 9px;
        border: 2px solid #222;
        border-bottom: 1px solid #888;
        color: #c6c6c6;
      }
      .stack {
        height: 139px;
        margin: 0 9px;
        background: #646464;
        border: 2px solid #e2e2e2;
        border-right-width: 1px;
      }
      .item {
        display: flex;
        align-items: center;
        height: 17px;
        background: #1f2c37;
        border-bottom: 1px solid #7a8088;
        padding: 0 2px 0 6px;
        gap: 6px;
      }
      .item b {
        width: 9px;
        height: 9px;
        background: #050505;
        color: #666;
        font: 9px/9px "Liberation Sans", sans-serif;
        text-align: center;
      }
      .item svg { margin-left: auto; }
      .tools {
        display: flex;
        align-items: center;
        height: 20px;
        margin: 5px 0 13px 13px;
      }
      .tools button { width: 24px; }
      .tools i { width: 1px; height: 16px; background: #222; margin: 0 5px 0 6px; }
      .rule { height: 3px; background: #080808; margin: 0 4px 7px 5px; }
      .rollouts {
        display: flex;
        flex: 1;
        min-height: 0;
        margin: 0 4px 6px 4px;
        border: 1px solid #222;
        border-right: 0;
      }
      .list { flex: 1; min-width: 0; overflow: hidden; padding: 4px 2px 0 3px; }
      .bar { width: 5px; background: linear-gradient(#161616 32px, #bababa 32px); margin-left: 2px; }
      roll-out + roll-out { margin-top: 10px; }
      .levels { display: flex; align-items: center; height: 28px; padding-left: 15px; }
      .levels button { width: 24px; height: 24px; }
      .levels .active { background: #ffff00; border: 1px solid #ccc; }
      .checks { display: grid; gap: 5px; padding: 4px 3px 3px 6px; }
      .checks div, label { display: flex; align-items: center; gap: 5px; height: 14px; white-space: nowrap; }
      .checks div { gap: 4px; height: 16px; }
      .off { color: #1c1c1c; }
      input[type=checkbox] {
        appearance: none;
        width: 12px;
        height: 12px;
        border: 1px solid #222;
        border-right-color: #777;
        border-bottom-color: #777;
      }
      .checks .field { flex: 1; width: 0; height: 15px; }
      .spin { height: 16px; }
      .pairs { display: grid; grid-template-columns: 1fr 1fr; gap: 4px 6px; padding: 0 1px 0 5px; }
      .pairs > * { display: flex; height: 18px; gap: 3px; }
      .pairs span .flat { flex: 1; }
      fieldset {
        display: flex;
        justify-content: space-between;
        margin: 4px -2px 0;
        padding: 3px 3px 5px 2px;
        border: 1px solid #222;
        min-width: 0;
      }
      legend { padding: 0 3px; margin-left: 2px; }
      fieldset label { gap: 6px; }
      input[type=radio] {
        appearance: none;
        width: 11px;
        height: 11px;
        border: 1px solid #161616;
        border-right-color: #888;
        border-bottom-color: #888;
        border-radius: 50%;
      }
      input[type=radio]:checked { background: radial-gradient(#e8e8e8 3px, transparent 3px); }
      .count { margin: 9px 8px 22px; text-align: right; }
      .foot { border-top: 1px solid #1e1e1e; }
    </style>
    <div class="tabs">
      ${['create', 'modify', 'hierarchy', 'motion', 'display', 'hammer'].map((n) => `<button class="${n === 'modify' ? 'active' : ''}" aria-label="${n}"><max-icon name="${n}" size="21"></max-icon></button>`).join('')}
    </div>
    <div class="name"><input class="field" type="text" aria-label="Object name" value="Box02"><button class="swatch" aria-label="Object color"></button></div>
    <select class="dark" aria-label="Modifiers"><option>Modifier List</option></select>
    <div class="stack"><div class="item"><b>+</b>Editable Poly<svg width="16" height="14"><path d="M3 5v3M1.500 6.500h3M9 9v3M7.500 10.500h3M14 0v3M12.500 1.500h3" stroke="#fff"/></svg></div></div>
    <div class="tools">
      <button aria-label="Pin stack"><max-icon name="pin" size="18"></max-icon></button><i></i>
      <button aria-label="Show end result"><max-icon name="tube" size="17"></max-icon></button><i></i>
      <button aria-label="Make unique"><max-icon name="unique" size="16"></max-icon></button>
      <button aria-label="Remove modifier"><max-icon name="trash" size="16"></max-icon></button><i></i>
      <button aria-label="Configure sets"><max-icon name="configure" size="18"></max-icon></button>
    </div>
    <div class="rule"></div>
    <div class="rollouts">
      <div class="list">
        <roll-out open label="Selection">
          <div class="levels">
            <button class="active" aria-label="Vertex"><svg width="22" height="22"><path d="M7 12v3M5.500 13.500h3M17 5v3M15.500 6.500h3M13 16v3M11.500 17.500h3" stroke="#c01000"/></svg></button>
            <button aria-label="Edge"><max-icon name="edge" size="16"></max-icon></button>
            <button aria-label="Border"><max-icon name="border" size="16"></max-icon></button>
            <button aria-label="Polygon"><max-icon name="polygon" size="15"></max-icon></button>
            <button aria-label="Element"><max-icon name="element" size="15"></max-icon></button>
          </div>
          <div class="checks">
            <label class="off"><input type="checkbox">By Vertex</label>
            <label><input type="checkbox">Ignore Backfacing</label>
            <div><label class="off"><input type="checkbox">By Angle:</label><input class="field" type="text" aria-label="Angle" value="45.0"><button class="spin" aria-label="Adjust angle"></button></div>
          </div>
          <div class="pairs">
            <button class="flat">Shrink</button><button class="flat">Grow</button>
            <span><button class="flat off">Ring</button><button class="spin" aria-label="Shift ring"></button></span>
            <span><button class="flat off">Loop</button><button class="spin" aria-label="Shift loop"></button></span>
          </div>
          <fieldset>
            <legend>Preview Selection</legend>
            <label><input type="radio" name="preview" checked>Off</label>
            <label><input type="radio" name="preview">SubObj</label>
            <label><input type="radio" name="preview">Multi</label>
          </fieldset>
          <div class="count">0 Vertices Selected</div>
        </roll-out>
        <roll-out label="Soft Selection"></roll-out>
        <roll-out label="Edit Geometry"></roll-out>
      </div>
      <div class="bar"></div>
    </div>
    <div class="foot"></div>`;
  }
}

class StatusBar extends HTMLElement {
  constructor() {
    super();
    const icon = (name, size = 20, cls = '') => `<button class="ic ${cls}" aria-label="${name}"><max-icon name="${name}" size="${size}"></max-icon></button>`;
    const shadow = this.attachShadow({ mode: 'open' });
    shadow.innerHTML = `<style>${controls}
      :host {
        display: flex;
        height: 50px;
        box-sizing: border-box;
        padding-top: 3px;
        overflow: hidden;
      }
      .listener {
        display: grid;
        grid-template-rows: 22px 23px;
        width: 99px;
        flex: none;
        gap: 1px;
        margin-right: 8px;
      }
      .listener input {
        width: 100%;
        background: #fff;
        border: 2px solid #999;
        border-color: #777 #eee #eee #777;
        color: #000;
        padding-left: 4px;
        font: 12px/16px "Liberation Mono", monospace;
      }
      .listener .macro { background: #dcc5c7; }
      .info {
        flex: 1;
        display: grid;
        grid-template-rows: 21px 21px;
        gap: 4px;
        min-width: 0;
      }
      .row { display: flex; align-items: center; min-width: 0; }
      .box {
        height: 21px;
        border: 1px solid #222;
        border-right-color: #5e5e5e;
        border-bottom-color: #5e5e5e;
        padding: 4px 5px 0;
        white-space: nowrap;
      }
      .grow { flex: 1; min-width: 0; }
      .wide { width: 100px; padding-left: 4px; }
      .row label { display: flex; align-items: center; margin-right: 14px; gap: 2px; }
      .row .field { width: 58px; height: 21px; }
      .ic { width: 27px; height: 21px; flex: none; position: relative; }
      .cube { width: 22px; border: 1px solid #222; margin: 0 3px 0 4px; background: #5a5a5a; }
      .tan { width: 23px; }
      .setkey {
        width: 44px;
        height: 44px;
        margin: 0 3px;
        flex: none;
      }
      .keys { display: grid; grid-template: 21px 21px / 48px 115px; gap: 2px 3px; flex: none; align-content: start; }
      .keys div { display: flex; gap: 3px; }
      .keys div .flat { flex: 1; }
      select { height: 20px; }
      .play, .nav { display: grid; grid-auto-rows: 21px; gap: 2px 0; flex: none; align-content: start; }
      .play { grid-template-columns: 29px 24px 24px 24px 28px; margin-left: 2px; }
      .nav { grid-template-columns: repeat(4, 23px); padding-right: 3px; }
      .nav .ic, .play .ic { width: 100%; }
      .frame { grid-column: 2 / 5; display: flex; gap: 3px; }
      .frame .field { width: 62px; height: 20px; }
      .frame .spin { height: 18px; margin-top: 1px; width: 11px; }
      .fly::after {
        content: "";
        position: absolute;
        right: 1px;
        bottom: 1px;
        border: 2px solid transparent;
        border-right-color: #fff;
        border-bottom-color: #fff;
      }
    </style>
    <div class="listener">
      <input class="macro" type="text" aria-label="Macro recorder">
      <input type="text" aria-label="Listener" value="Welcome to MAXScript.">
    </div>
    <div class="info">
      <div class="row">
        <div class="box grow">1 Object Selected</div>
        ${icon('lock', 16)}${icon('absolute', 17)}
        <label>X:<input class="field" type="text" value="9876.659"></label>
        <label>Y:<input class="field" type="text" value="-839.45"></label>
        <label>Z:<input class="field" type="text" value="0.0"></label>
        <div class="box wide">Grid = 10.0</div>
      </div>
      <div class="row">
        <div class="box grow">Click or click-and-drag to select objects</div>
        ${icon('isolate', 16, 'cube')}
        <div class="box wide">Add Time Tag</div>
      </div>
    </div>
    <button class="setkey flat" aria-label="Set keys"><max-icon name="key" size="24"></max-icon></button>
    <div class="keys">
      <button class="flat">Auto Key</button>
      <select aria-label="Key selection"><option>Selected</option></select>
      <button class="flat">Set Key</button>
      <div>${icon('tangent', 18, 'tan fly')}<button class="flat">Key Filters...</button></div>
    </div>
    <div class="play">
      ${icon('first')}${icon('prev')}${icon('play', 20, 'fly')}${icon('next')}${icon('last')}
      ${icon('keymode')}<div class="frame"><input class="field" type="text" aria-label="Current frame" value="0"><button class="spin" aria-label="Adjust frame"></button></div>${icon('timeconfig', 18)}
    </div>
    <div class="nav">
      ${icon('zoom', 18)}${icon('zoomall', 18)}${icon('extents', 17, 'fly')}${icon('extentsall', 18, 'fly')}
      ${icon('fov', 17, 'fly')}${icon('pan', 18, 'fly')}${icon('orbit', 18, 'fly')}${icon('maximize', 17)}
    </div>`;
  }
}

class TaskBar extends HTMLElement {
  constructor() {
    super();
    const shadow = this.attachShadow({ mode: 'open' });
    shadow.innerHTML = `<style>${controls}
      :host {
        display: flex;
        align-items: center;
        height: 40px;
        box-sizing: border-box;
        border-top: 1px solid #1e3a52;
        box-shadow: inset 0 1px #9ccbe8;
        color: #fff;
        font: 12px/17px var(--ui);
        background:
          radial-gradient(ellipse 260px 130px at -15px 110px, transparent 94%, #8cc0ee 98%, transparent 102%) 780px 0 / 300px 40px no-repeat,
          linear-gradient(172deg, transparent 45%, #6db9e855 50%, transparent 55%) 400px 0 / 400px 40px no-repeat,
          linear-gradient(90deg, #3b8fc0 0, #4aa7d4 8%, #3d9ed6 22%, #3f9fd8 40%, #2b86cb 52%, #1f70bd 66%, #2273c0 76%, #1b5c9f 82%, #143f73 86%, #123a6a 100%);
      }
      button { flex: none; }
      .pinned { width: 61px; height: 38px; }
      .start { width: 58px; padding-right: 4px; }
      .open {
        width: 59px;
        height: 38px;
        margin-right: 3px;
        border: 1px solid #3b6c94;
        border-radius: 2px;
        background: linear-gradient(135deg, #a3cfea, #77b5df 60%, #8ec4e6);
        box-shadow: inset 0 0 0 1px #c4e3f5;
      }
      .current { background: linear-gradient(135deg, #d9edf8, #b5d8ee); }
      .current span {
        display: flex;
        align-items: center;
        justify-content: center;
        width: 26px;
        height: 31px;
        background: linear-gradient(150deg, #0c302f, #17695f);
        border: 1px solid #0b2a2a;
      }
      .tray { display: flex; align-items: center; gap: 9px; margin-left: auto; }
      .up { border: 4px solid transparent; border-top: 0; border-bottom: 4px solid #fff; margin: 0 3px 0 5px; }
      .clock { width: 62px; text-align: center; }
      .desk {
        width: 14px;
        height: 39px;
        border: 1px solid #6d93b8;
        background: linear-gradient(135deg, #5d82a6, #1d3f66);
      }
    </style>
    <button class="pinned start" aria-label="Start"><max-icon name="start" size="36"></max-icon></button>
    <button class="pinned" aria-label="Internet Explorer"><max-icon name="ie" size="30"></max-icon></button>
    <button class="pinned" aria-label="Windows Explorer"><max-icon name="explorer" size="31"></max-icon></button>
    <button class="pinned" aria-label="Media Player"><max-icon name="wmp" size="27"></max-icon></button>
    <button class="open" aria-label="Paint" style="margin-left: 4px"><max-icon name="paint" size="31"></max-icon></button>
    <button class="open" aria-label="Chrome"><max-icon name="chrome" size="29"></max-icon></button>
    <button class="open current" aria-label="3ds Max"><span><max-icon name="maxlogo" size="17"></max-icon></span></button>
    <div class="tray">
      <max-icon name="traykeys" size="16"></max-icon><i class="up"></i>
      <max-icon name="trayflag" size="16"></max-icon>
      <max-icon name="trayplug" size="16"></max-icon>
      <max-icon name="traysignal" size="16"></max-icon>
      <div class="clock">4:16 PM<br>4/1/2011</div>
      <button class="desk" aria-label="Show desktop"></button>
    </div>`;
  }
}

class MaxApp extends HTMLElement {
  constructor() {
    super();
    const shadow = this.attachShadow({ mode: 'open' });
    shadow.innerHTML = `<style>
      :host {
        display: flex;
        flex-direction: column;
        height: 100vh;
      }
      :host > * { flex: none; box-sizing: border-box; }
      title-bar, menu-bar, tool-bar, ribbon-bar { flex: none; box-sizing: border-box; }
      .work { display: flex; flex: 1; min-height: 0; }
      .left { flex: 1; display: flex; flex-direction: column; min-width: 0; }
      .grid {
        flex: 1;
        min-height: 0;
        display: grid;
        grid-template: 1fr 1fr / 1fr 1fr;
        gap: 4px;
      }
    </style>
    <title-bar></title-bar>
    <menu-bar></menu-bar>
    <tool-bar></tool-bar>
    <ribbon-bar></ribbon-bar>
    <div class="work">
      <div class="left">
        <div class="grid">
          <view-port scene="top">[ + ] [ Top ] [ Hidden Line ]</view-port>
          <view-port scene="front">[ + ] [ Front ] [ Wireframe ]</view-port>
          <view-port scene="left">[ + ] [ Left ] [ Wireframe ]</view-port>
          <view-port scene="perspective" active>[ + ] [ Perspective ] [ Smooth + Highlights + Edged Faces ]</view-port>
        </div>
        <time-slider></time-slider>
        <track-bar></track-bar>
      </div>
      <command-panel></command-panel>
    </div>
    <status-bar></status-bar>
    <task-bar></task-bar>`;
  }
}

(() => {

  customElements.define('max-icon', MaxIcon);
  customElements.define('title-bar', TitleBar);
  customElements.define('menu-bar', MenuBar);
  customElements.define('tool-bar', ToolBar);
  customElements.define('ribbon-bar', RibbonBar);
  customElements.define('view-port', ViewPort);
  customElements.define('time-slider', TimeSlider);
  customElements.define('track-bar', TrackBar);
  customElements.define('roll-out', RollOut);
  customElements.define('command-panel', CommandPanel);
  customElements.define('status-bar', StatusBar);
  customElements.define('task-bar', TaskBar);
  customElements.define('max-app', MaxApp);

})();
</script>
</body>
</html>
